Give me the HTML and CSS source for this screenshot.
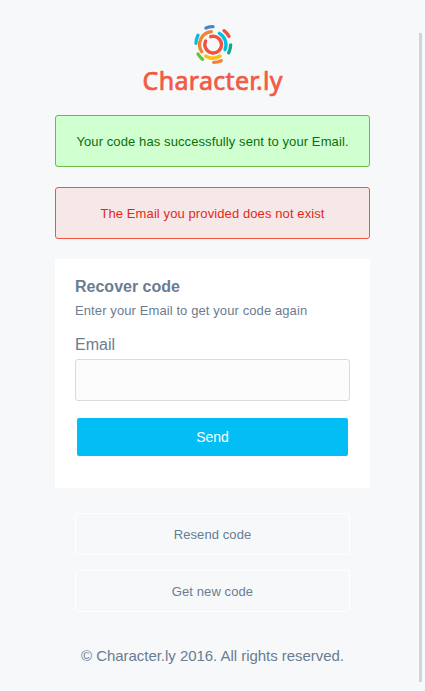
FILE: index.html
```html
<!DOCTYPE html>
<html lang="en">
<head>
<meta charset="utf-8">
<title>Character.ly - Recover code</title>
<link rel="stylesheet" href="styles.css">
</head>
<body>
<main class="page">
  <svg class="logo" viewBox="0 0 155 80" role="img" aria-label="Character.ly">
    <g class="mark" transform="translate(50 0) scale(.33333)">
      <path stroke="#f0523d" d="M62 69A25 25 0 1 0 77 56"/>
      <path stroke="#f58233" d="M50 101A39 39 0 0 1 79 41"/>
      <path stroke="#fbbd16" d="M62 114A40 40 0 0 0 105 114"/>
      <path stroke="#05bce3" d="M103 46A39 39 0 0 1 120 95"/>
      <path stroke="#4686cc" d="M63 30A54 54 0 0 1 84 26"/>
      <path stroke="#06bce3" d="M39 52A53 53 0 0 0 33 76"/>
      <path stroke="#f0523d" d="M117 38A53 53 0 0 1 132 55"/>
      <path stroke="#10a887" d="M137 81A53 53 0 0 1 131 104"/>
      <path stroke="#f58233" d="M86 133A53 53 0 0 0 109 128"/>
      <path stroke="#6cbf45" d="M39 108A53 53 0 0 0 53 124"/>
    </g>
    <text class="wordmark" x="7.5" y="72" textLength="140" lengthAdjust="spacing">Character.ly</text>
  </svg>
  <div class="alert success">Your code has successfully sent to your Email.</div>
  <div class="alert error">The Email you provided does not exist</div>
  <form class="card">
    <h1>Recover code</h1>
    <p>Enter your Email to get your code again</p>
    <label for="email">Email</label>
    <input id="email" type="email">
    <button type="button">Send</button>
  </form>
  <nav class="links">
    <a>Resend code</a>
    <a>Get new code</a>
  </nav>
  <footer>© Character.ly 2016. All rights reserved.</footer>
</main>
<div class="scrollbar"></div>
</body>
</html>
```
FILE: styles.css
```css
* { box-sizing: border-box; }
body {
  margin: 0;
  height: 691px;
  overflow: hidden;
  background: #f6f8fa;
  color: #6a7c92;
  font-family: "Liberation Sans", Arial, sans-serif;
  font-size: 13px;
}
.page {
  width: 315px;
  margin-left: 55px;
  padding-top: 18px;
  display: flex;
  flex-direction: column;
}
.logo {
  width: 155px;
  height: 80px;
  margin: 0 0 17px 80px;
}
.mark {
  fill: none;
  stroke-width: 10;
  stroke-linecap: round;
}
.wordmark {
  font: 400 25px "Noto Sans", sans-serif;
  fill: #f25a43;
  stroke: #f25a43;
  stroke-width: .7;
  stroke-linejoin: round;
}
.alert {
  height: 52px;
  margin-bottom: 20px;
  border: 1px solid;
  border-radius: 3px;
  line-height: 51px;
  letter-spacing: .1px;
  text-align: center;
  white-space: nowrap;
}
.success {
  background: #d0ffd0;
  border-color: #70ba42;
  color: #087008;
}
.error {
  background: #f5e8e7;
  border-color: #f0553f;
  color: #e82720;
}
.card {
  height: 229px;
  padding: 18px 20px 0;
  background: #fff;
}
.card h1 {
  margin: 0;
  font-size: 16px;
  line-height: 20px;
}
.card p {
  margin: 6px 0 0;
  line-height: 16px;
  letter-spacing: .1px;
}
.card label {
  display: block;
  margin-top: 16px;
  font-size: 16px;
  line-height: 20px;
}
.card input {
  display: block;
  width: 100%;
  height: 42px;
  margin-top: 4px;
  padding: 0 10px;
  border: 1px solid #d9dadb;
  border-radius: 3px;
  background: #fcfcfc;
}
.card button {
  display: block;
  width: 271px;
  height: 38px;
  margin: 17px 2px 0;
  padding: 0;
  border: 0;
  border-radius: 2px;
  background: #03bdf5;
  color: #fff;
  font: 14px "Liberation Sans", Arial, sans-serif;
}
.links {
  display: grid;
  gap: 15px;
  margin: 25px 20px 0;
}
.links a {
  height: 42px;
  border: 1px solid #fff;
  border-radius: 3px;
  line-height: 41px;
  letter-spacing: .1px;
  text-align: center;
}
footer {
  margin-top: 34px;
  font-size: 15px;
  line-height: 20px;
  letter-spacing: -.04px;
  text-align: center;
}
.scrollbar {
  position: absolute;
  top: 33px;
  right: 3px;
  width: 3px;
  height: 649px;
  background: #d3d4d7;
}
```
